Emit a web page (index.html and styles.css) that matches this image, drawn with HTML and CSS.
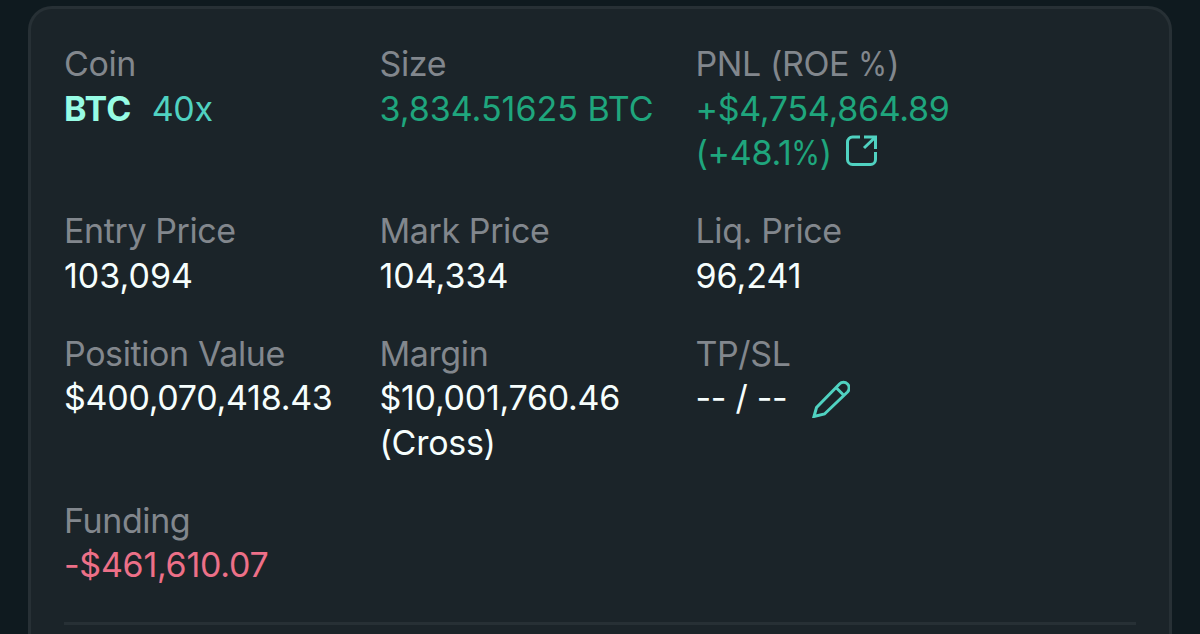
FILE: index.html
```html
<!DOCTYPE html>
<html lang="en">
<head>
    <meta charset="UTF-8">
    <meta name="viewport" content="width=device-width, initial-scale=1.0">
    <title>Position</title>
    <link rel="stylesheet" href="styles.css">
</head>
<body>
    <div class="card">
        <div class="grid">
            <div class="item">
                <div class="label">Coin</div>
                <div class="value coin"><b>BTC</b> <span class="leverage">40x</span></div>
            </div>
            <div class="item">
                <div class="label">Size</div>
                <div class="value size green">3,834.51625 BTC</div>
            </div>
            <div class="item">
                <div class="label">PNL (ROE <span class="percent">%</span>)</div>
                <div class="value green">+$4,754,864.89</div>
                <div class="value green with-icon">
                    <span>(+48.1<span class="percent">%</span>)</span>
                    <svg class="share-icon" width="32" height="32" viewBox="0 0 32 32">
                        <path d="M14 2H6.500a5 5 0 0 0-5 5v17.500a5 5 0 0 0 5 5h18a5 5 0 0 0 5-5V17M18 2h11.500v12M29 2.500L18 13"/>
                    </svg>
                </div>
            </div>

            <div class="item">
                <div class="label">Entry Price</div>
                <div class="value price">103,094</div>
            </div>
            <div class="item">
                <div class="label">Mark Price</div>
                <div class="value price">104,334</div>
            </div>
            <div class="item">
                <div class="label">Liq. Price</div>
                <div class="value price">96,241</div>
            </div>

            <div class="item">
                <div class="label">Position Value</div>
                <div class="value">$400,070,418.43</div>
            </div>
            <div class="item">
                <div class="label">Margin</div>
                <div class="value">$10,001,760.46</div>
                <div class="value">(Cross)</div>
            </div>
            <div class="item">
                <div class="label">TP/SL</div>
                <div class="value with-icon">
                    <span>-- / --</span>
                    <svg class="edit-icon" width="38" height="38" viewBox="0 0 38 38">
                        <path d="M2 36.500L4.500 27.500 27.500 4a5.600 5.600 0 0 1 8 8L12.500 34zM24 7.500l7.500 7.500"/>
                    </svg>
                </div>
            </div>

            <div class="item">
                <div class="label">Funding</div>
                <div class="value red">-$461,610.07</div>
            </div>
        </div>
    </div>
</body>
</html>
```
FILE: styles.css
```css
body {
    height: 634px;
    margin: 0;
    background-color: #0f1a1f;
    font-family: Inter, sans-serif;
    font-size: 34px;
    line-height: 44.7px;
    color: #f6fefd;
    overflow: hidden;
}

.card {
    box-sizing: border-box;
    width: 1144px;
    height: 628px;
    margin: 6px 0 0 28px;
    padding: 33px 33px 0;
    border: 3px solid #273035;
    border-bottom: none;
    border-radius: 24px 24px 0 0;
    background-color: #1b2429;
}

.grid {
    display: grid;
    grid-template-columns: 315.5px 316px 1fr;
    row-gap: 33px;
    padding-bottom: 34px;
    border-bottom: 3px solid #273035;
    white-space: nowrap;
}

.label {
    letter-spacing: -0.4px;
    color: #82878d;
}

.value {
    letter-spacing: -0.28px;
}

.size,
.price {
    letter-spacing: 0;
}

.green {
    color: #1fa67d;
}

.red {
    color: #ed7088;
}

.coin b {
    letter-spacing: 0;
    color: #97fce4;
}

.leverage {
    margin-left: 11px;
    color: #50d2c1;
}

/* narrower percent sign */
.percent {
    display: inline-block;
    margin: 0 -2px;
    transform: scaleX(0.86);
}

.value .percent {
    margin: 0 -2.5px;
}

.with-icon {
    display: flex;
    align-items: center;
}

svg {
    fill: none;
    stroke: #50d2c1;
    stroke-width: 3;
}

.share-icon {
    margin: -6px 0 0 14px;
}

.edit-icon {
    margin: 0 0 0 25px;
}
```
